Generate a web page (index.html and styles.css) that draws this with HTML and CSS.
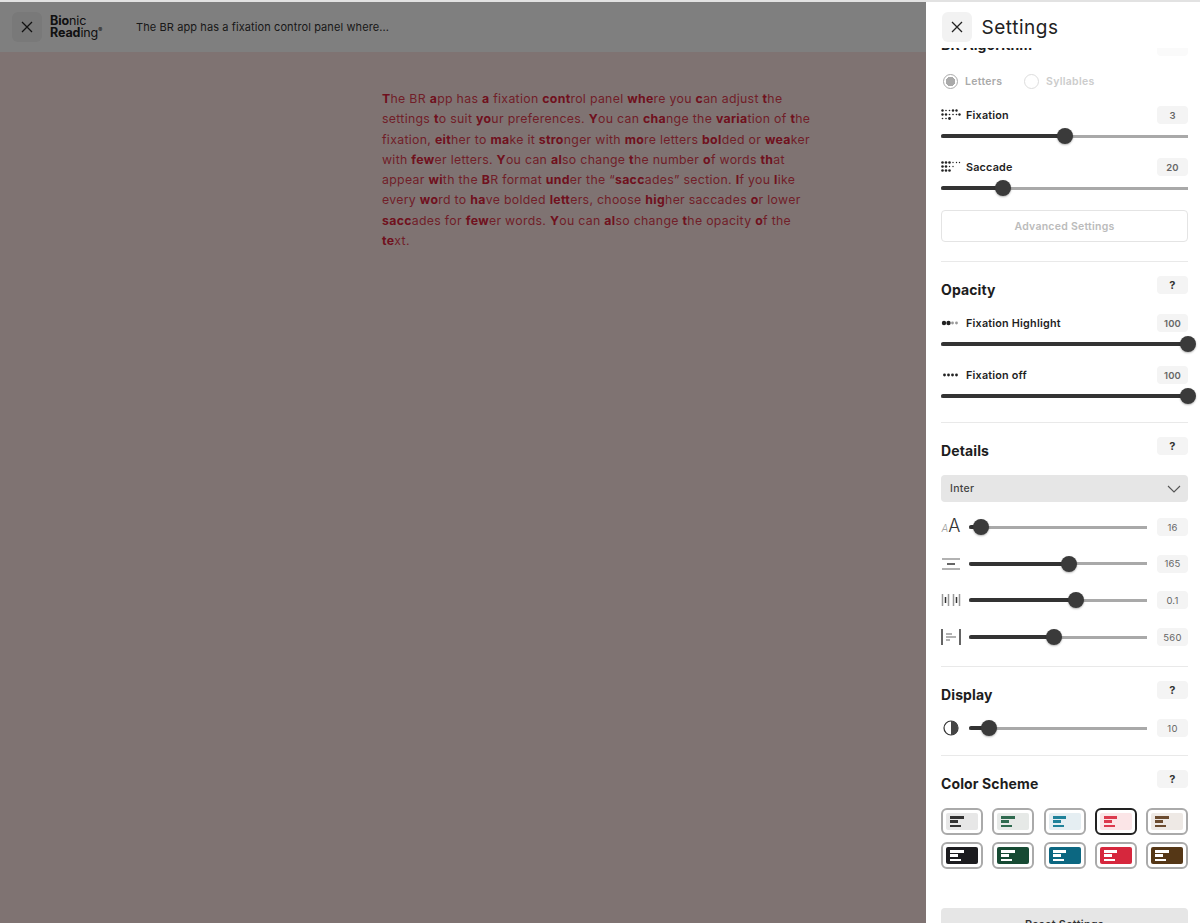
FILE: index.html
```html
<!DOCTYPE html>
<html lang="en">
<head>
<meta charset="utf-8">
<title>Bionic Reading</title>
<link rel="stylesheet" href="styles.css">
</head>
<body>
<div class="topline"></div>
<div class="stage">
  <div class="reader">
    <header class="bar">
      <button class="close close-reader" aria-label="Close"><svg width="12" height="12" viewBox="0 0 12 12"><path d="M1 1l10 10M11 1L1 11" class="x"/></svg></button>
      <div class="logo"><div><b>Bio</b>nic</div><div><b>Read</b>ing<sup>®</sup></div></div>
      <div class="doc-title">The BR app has a fixation control panel where...</div>
    </header>
    <main class="doc">
      <p class="doc-text"><b>T</b>he BR <b>a</b>pp has <b>a</b> fixation <b>cont</b>rol panel <b>whe</b>re you <b>c</b>an adjust <b>t</b>he settings <b>t</b>o suit <b>yo</b>ur preferences. <b>Y</b>ou can <b>cha</b>nge the <b>varia</b>tion of <b>t</b>he fixation, <b>eit</b>her to <b>ma</b>ke it <b>stro</b>nger with <b>mo</b>re letters <b>bol</b>ded or <b>wea</b>ker with <b>few</b>er letters. <b>Y</b>ou can <b>al</b>so change <b>t</b>he number <b>o</b>f words <b>th</b>at appear <b>wi</b>th the <b>B</b>R format <b>und</b>er the “<b>sacc</b>ades” section. <b>I</b>f you <b>l</b>ike every <b>wo</b>rd to <b>ha</b>ve bolded <b>lett</b>ers, choose <b>hig</b>her saccades <b>o</b>r lower <b>sacc</b>ades for <b>few</b>er words. <b>Y</b>ou can <b>al</b>so change <b>t</b>he opacity <b>o</b>f the <b>te</b>xt.</p>
    </main>
  </div>
  <div class="scrim"></div>
  <aside class="panel">
    <header class="panel-head">
      <button class="close close-panel" aria-label="Close"><svg width="12" height="12" viewBox="0 0 12 12"><path d="M1 1l10 10M11 1L1 11" class="x"/></svg></button>
      <h1>Settings</h1>
    </header>
    <div class="scroll">
      <div class="scroll-inner">
        <section class="group first">
          <div class="group-head"><h2>BR Algorithm</h2><span class="badge help faint">?</span></div>
          <div class="radios">
            <label class="radio on"><i></i>Letters</label>
            <label class="radio"><i></i>Syllables</label>
          </div>
          <div class="field">
            <div class="field-label">
              <svg class="ico" width="20" height="12" viewBox="0 0 20 12"><g class="dots"><circle cx="1.5" cy="1.500" r="1.200"/><circle cx="5" cy="1.500" r=".8"/><circle cx="8.5" cy="1.500" r=".8"/><circle cx="12" cy="1.500" r="1.200"/><circle cx="15.5" cy="1.500" r="1.200"/><circle cx="1.5" cy="5.500" r="1.200"/><circle cx="5" cy="5.500" r="1.200"/><circle cx="8.5" cy="5.500" r=".8"/><circle cx="12" cy="5.500" r=".8"/><circle cx="15.5" cy="5.500" r=".8"/><circle cx="18.5" cy="5.500" r="1.200"/><circle cx="1.5" cy="9.500" r=".8"/><circle cx="5" cy="9.500" r=".8"/><circle cx="8.5" cy="9.500" r="1.400"/></g></svg>
              <span>Fixation</span><em class="badge">3</em>
            </div>
            <div class="slider" style="--v:50%"></div>
          </div>
          <div class="field">
            <div class="field-label">
              <svg class="ico" width="20" height="12" viewBox="0 0 20 12"><g class="dots"><circle cx="1.5" cy="1.500" r="1.300"/><circle cx="5" cy="1.500" r="1.300"/><circle cx="8.5" cy="1.500" r="1.300"/><circle cx="12" cy="1.500" r=".7"/><circle cx="15.5" cy="1.500" r=".7"/><circle cx="18.5" cy="1.500" r=".7"/><circle cx="1.5" cy="5.500" r="1.300"/><circle cx="5" cy="5.500" r="1.300"/><circle cx="8.5" cy="5.500" r=".7"/><circle cx="12" cy="5.500" r=".7"/><circle cx="1.5" cy="9.500" r="1.300"/><circle cx="5" cy="9.500" r="1.300"/><circle cx="8.5" cy="9.500" r="1.300"/></g></svg>
              <span>Saccade</span><em class="badge">20</em>
            </div>
            <div class="slider" style="--v:25%"></div>
          </div>
          <button class="btn-outline">Advanced Settings</button>
        </section>

        <section class="group">
          <div class="group-head"><h2>Opacity</h2><span class="badge help">?</span></div>
          <div class="field">
            <div class="field-label">
              <svg class="ico" width="20" height="12" viewBox="0 0 20 12"><g class="dots"><circle cx="3" cy="6" r="2.200"/><circle cx="7.5" cy="6" r="2.200"/></g><g class="dots-light"><circle cx="11.5" cy="6" r="1.400"/><circle cx="15.5" cy="6" r="1.400"/></g></svg>
              <span>Fixation Highlight</span><em class="badge">100</em>
            </div>
            <div class="slider" style="--v:100%"></div>
          </div>
          <div class="field">
            <div class="field-label">
              <svg class="ico" width="20" height="12" viewBox="0 0 20 12"><g class="dots"><circle cx="3.5" cy="6" r="1.400"/><circle cx="7.500" cy="6" r="1.400"/><circle cx="11.500" cy="6" r="1.400"/><circle cx="15.500" cy="6" r="1.400"/></g></svg>
              <span>Fixation off</span><em class="badge">100</em>
            </div>
            <div class="slider" style="--v:100%"></div>
          </div>
        </section>

        <section class="group">
          <div class="group-head"><h2>Details</h2><span class="badge help">?</span></div>
          <div class="select"><span>Inter</span><svg width="14" height="8" viewBox="0 0 14 8"><path d="M1 1l6 6 6-6" class="chev"/></svg></div>
          <div class="rows">
            <div class="row">
              <span class="ico-box aa"><i>A</i><b>A</b></span>
              <div class="slider" style="--v:7%"></div><em class="badge">16</em>
            </div>
            <div class="row">
              <svg class="ico-box" width="20" height="14" viewBox="0 0 20 14"><path d="M1 2h18M1 12h18" class="grey"/><path d="M6 7h8" class="dark"/></svg>
              <div class="slider" style="--v:56%"></div><em class="badge">165</em>
            </div>
            <div class="row">
              <svg class="ico-box" width="20" height="14" viewBox="0 0 20 14"><path d="M1.500 1v12M7.500 1v12M12.500 1v12M18.500 1v12" class="grey"/><path d="M4.500 4v6M15.500 4v6" class="dark"/></svg>
              <div class="slider" style="--v:60%"></div><em class="badge">0.1</em>
            </div>
            <div class="row">
              <svg class="ico-box" width="20" height="16" viewBox="0 0 20 16"><path d="M1 0v16M19 0v16" class="dark"/><path d="M5 5h6M5 8h10M5 11h4" class="grey"/></svg>
              <div class="slider" style="--v:48%"></div><em class="badge">560</em>
            </div>
          </div>
        </section>

        <section class="group">
          <div class="group-head"><h2>Display</h2><span class="badge help">?</span></div>
          <div class="row display-row">
            <svg class="ico-box" width="20" height="16" viewBox="0 0 20 16"><circle cx="10" cy="8" r="7" class="ring"/><path d="M10 1a7 7 0 0 1 0 14z" class="half"/></svg>
            <div class="slider" style="--v:11%"></div><em class="badge">10</em>
          </div>
        </section>

        <section class="group last">
          <div class="group-head"><h2>Color Scheme</h2><span class="badge help">?</span></div>
          <div class="swatches">
            <div class="swatch s-grey"><div><i></i><i></i><i></i></div></div>
            <div class="swatch s-green"><div><i></i><i></i><i></i></div></div>
            <div class="swatch s-teal"><div><i></i><i></i><i></i></div></div>
            <div class="swatch s-red selected"><div><i></i><i></i><i></i></div></div>
            <div class="swatch s-brown"><div><i></i><i></i><i></i></div></div>
            <div class="swatch d-black"><div><i></i><i></i><i></i></div></div>
            <div class="swatch d-green"><div><i></i><i></i><i></i></div></div>
            <div class="swatch d-teal"><div><i></i><i></i><i></i></div></div>
            <div class="swatch d-red"><div><i></i><i></i><i></i></div></div>
            <div class="swatch d-brown"><div><i></i><i></i><i></i></div></div>
          </div>
          <button class="btn-fill">Reset Settings</button>
        </section>
      </div>
    </div>
  </aside>
</div>
</body>
</html>
```
FILE: styles.css
```css
* { box-sizing: border-box; }
html, body { margin: 0; height: 100%; overflow: hidden; }
body { font-family: Inter, "Liberation Sans", sans-serif; background: #fff; color: #222; }
button { font: inherit; border: 0; padding: 0; }

.topline { height: 2px; background: #e2e2e2; }
.stage { position: relative; height: 921px; overflow: hidden; }

.reader { height: 100%; background: #ffe7e5; }
.bar { display: flex; align-items: center; height: 50px; background: #fff; padding-left: 12px; }
.close { display: flex; align-items: center; justify-content: center; width: 30px; height: 30px; border-radius: 6px; background: #f2f2f2; }
.x { fill: none; stroke: #222; stroke-width: 1.3; }
.logo { margin-left: 8px; font-size: 12.5px; line-height: 12.500px; width: 86px; color: #222; letter-spacing: -.1px; }
.logo b { font-weight: 700; }
.logo sup { font-size: 6px; line-height: 0; vertical-align: 5px; }
.doc-title { font-size: 11px; letter-spacing: .1px; color: #333; }

.doc { padding: 37px 0 0 382px; }
.doc-text { margin: 0; width: 432px; font-size: 12.300px; line-height: 20.300px; letter-spacing: .31px; color: #e23f52; }
.doc-text b { font-weight: 700; color: #e0233c; }

.scrim { position: absolute; inset: 0; background: rgba(0, 0, 0, .5); }

.panel { position: absolute; top: 0; right: 0; bottom: 0; width: 274px; background: #fff; display: flex; flex-direction: column; }
.panel-head { position: relative; display: flex; align-items: center; height: 46px; padding: 10px 0 6px 16px; background: #fff; flex: none; }
.panel-head h1 { margin: 0 0 0 9.500px; font-size: 19px; font-weight: 400; letter-spacing: .55px; color: #222; }
.scroll { flex: 1; overflow: hidden; }
.scroll-inner { margin-top: -10px; padding: 0 12px 0 15px; }

.group { border-top: 1px solid #e9e9e9; padding: 14px 0 18px; }
.group.first { border-top: 0; padding-top: 0; }
.group.last { padding-bottom: 0; }
.group-head { display: flex; justify-content: space-between; align-items: flex-start; height: 24px; }
.group.first .group-head { height: 18px; }
.group h2 { margin: 4px 0 0; font-size: 14px; line-height: 20px; font-weight: 700; letter-spacing: .12px; color: #1d1d1d; }
.group.first h2 { margin-top: -3px; }

.badge { display: flex; align-items: center; justify-content: center; flex: none; width: 31px; height: 18px; border-radius: 4px; background: #f4f4f4; font-style: normal; font-size: 9.500px; letter-spacing: .2px; color: #666; }
.help { font-size: 11px; font-weight: 700; color: #333; }
.faint { background: #fafafa; color: transparent; }

.radios { display: flex; margin-top: 17px; height: 16px; padding-left: 2px; }
.radio { display: flex; align-items: center; gap: 7px; width: 81px; font-size: 10.500px; font-weight: 600; letter-spacing: .3px; color: #ccc; }
.radio i { width: 15px; height: 15px; border-radius: 50%; border: 1.500px solid #ddd; }
.radio.on { color: #aaa; }
.radio.on i { border-color: #aaa; background: radial-gradient(circle, #aaa 0 4.500px, #fff 5px); }

.field { margin-top: 14px; }
.radios + .field { margin-top: 17px; }
.field-label { display: flex; align-items: center; height: 18px; font-size: 10.800px; font-weight: 600; letter-spacing: .2px; color: #1f1f1f; }
.field-label span { flex: 1; margin-left: 5px; }
.ico { flex: none; }
.dots { fill: #222; }
.dots-light { fill: #999; }

.slider { position: relative; flex: 1; height: 16px; margin-top: 4px; background: linear-gradient(#a9a9a9, #a9a9a9) center / 100% 3px no-repeat; border-radius: 2px; }
.slider::before { content: ""; position: absolute; left: 0; top: 6px; width: var(--v); height: 4px; border-radius: 2px; background: #333; }
.slider::after { content: ""; position: absolute; left: var(--v); top: 0; width: 16px; height: 16px; margin-left: -8px; border-radius: 50%; background: #3a3a3a; box-shadow: 0 1px 2px rgba(0, 0, 0, .3); }

.btn-outline { display: block; width: 100%; height: 32px; margin: 14px 0 1px; background: #fff; border: 1px solid #e4e4e4; border-radius: 4px; font-size: 10.500px; font-weight: 600; letter-spacing: .25px; color: #bbb; }

.select { display: flex; align-items: center; justify-content: space-between; height: 27px; margin-top: 14px; padding: 0 7px 0 9px; background: #e6e6e6; border-radius: 4px; font-size: 10.500px; font-weight: 500; letter-spacing: .3px; color: #444; }
.chev { fill: none; stroke: #555; stroke-width: 1.100; }

.rows { display: flex; flex-direction: column; gap: 18.700px; margin-top: 16px; padding-bottom: 2px; }
.row { display: flex; align-items: center; height: 18px; }
.row .slider { margin: 0 10px 0 8px; }
.ico-box { flex: none; width: 20px; }
.aa { display: flex; align-items: baseline; justify-content: center; color: #333; line-height: 18px; }
.aa i { font-size: 10px; color: #999; font-weight: 300; }
.aa b { font-size: 18px; font-weight: 300; }
.grey { stroke: #999; stroke-width: 1.500; fill: none; }
.dark { stroke: #333; stroke-width: 1.500; fill: none; }
.ring { fill: #fff; stroke: #333; stroke-width: 1.200; }
.half { fill: #444; }
.display-row { margin-top: 14px; }

.swatches { display: grid; grid-template-columns: repeat(5, 42px); justify-content: space-between; row-gap: 7px; margin-top: 14px; }
.swatch { height: 27px; padding: 3px; border: 2px solid #aaa; border-radius: 6px; background: #fff; }
.swatch.selected { border-color: #222; }
.swatch div { display: flex; flex-direction: column; justify-content: center; align-items: flex-start; gap: 1.800px; height: 100%; padding-left: 4px; border-radius: 2px; background: var(--bg); }
.swatch i { display: block; height: 2.500px; background: var(--fg); }
.swatch i:nth-child(1) { width: 13.500px; }
.swatch i:nth-child(2) { width: 8px; }
.swatch i:nth-child(3) { width: 11px; }
.s-grey { --bg: #e7e7e7; --fg: #333; }
.s-green { --bg: #e6e9e7; --fg: #2f6a4f; }
.s-teal { --bg: #e5eef2; --fg: #20829a; }
.s-red { --bg: #fbe5e7; --fg: #dc3a4e; }
.s-brown { --bg: #eee9e5; --fg: #6c4c30; }
.d-black { --bg: #1c1c1f; --fg: #fff; }
.d-green { --bg: #164a33; --fg: #fff; }
.d-teal { --bg: #0c6781; --fg: #fff; }
.d-red { --bg: #d6273d; --fg: #fff; }
.d-brown { --bg: #553716; --fg: #fff; }

.btn-fill { display: block; width: 100%; height: 32px; margin-top: 39px; background: #e6e6e6; border-radius: 4px; font-size: 10.800px; font-weight: 600; letter-spacing: .3px; color: #333; }
```
